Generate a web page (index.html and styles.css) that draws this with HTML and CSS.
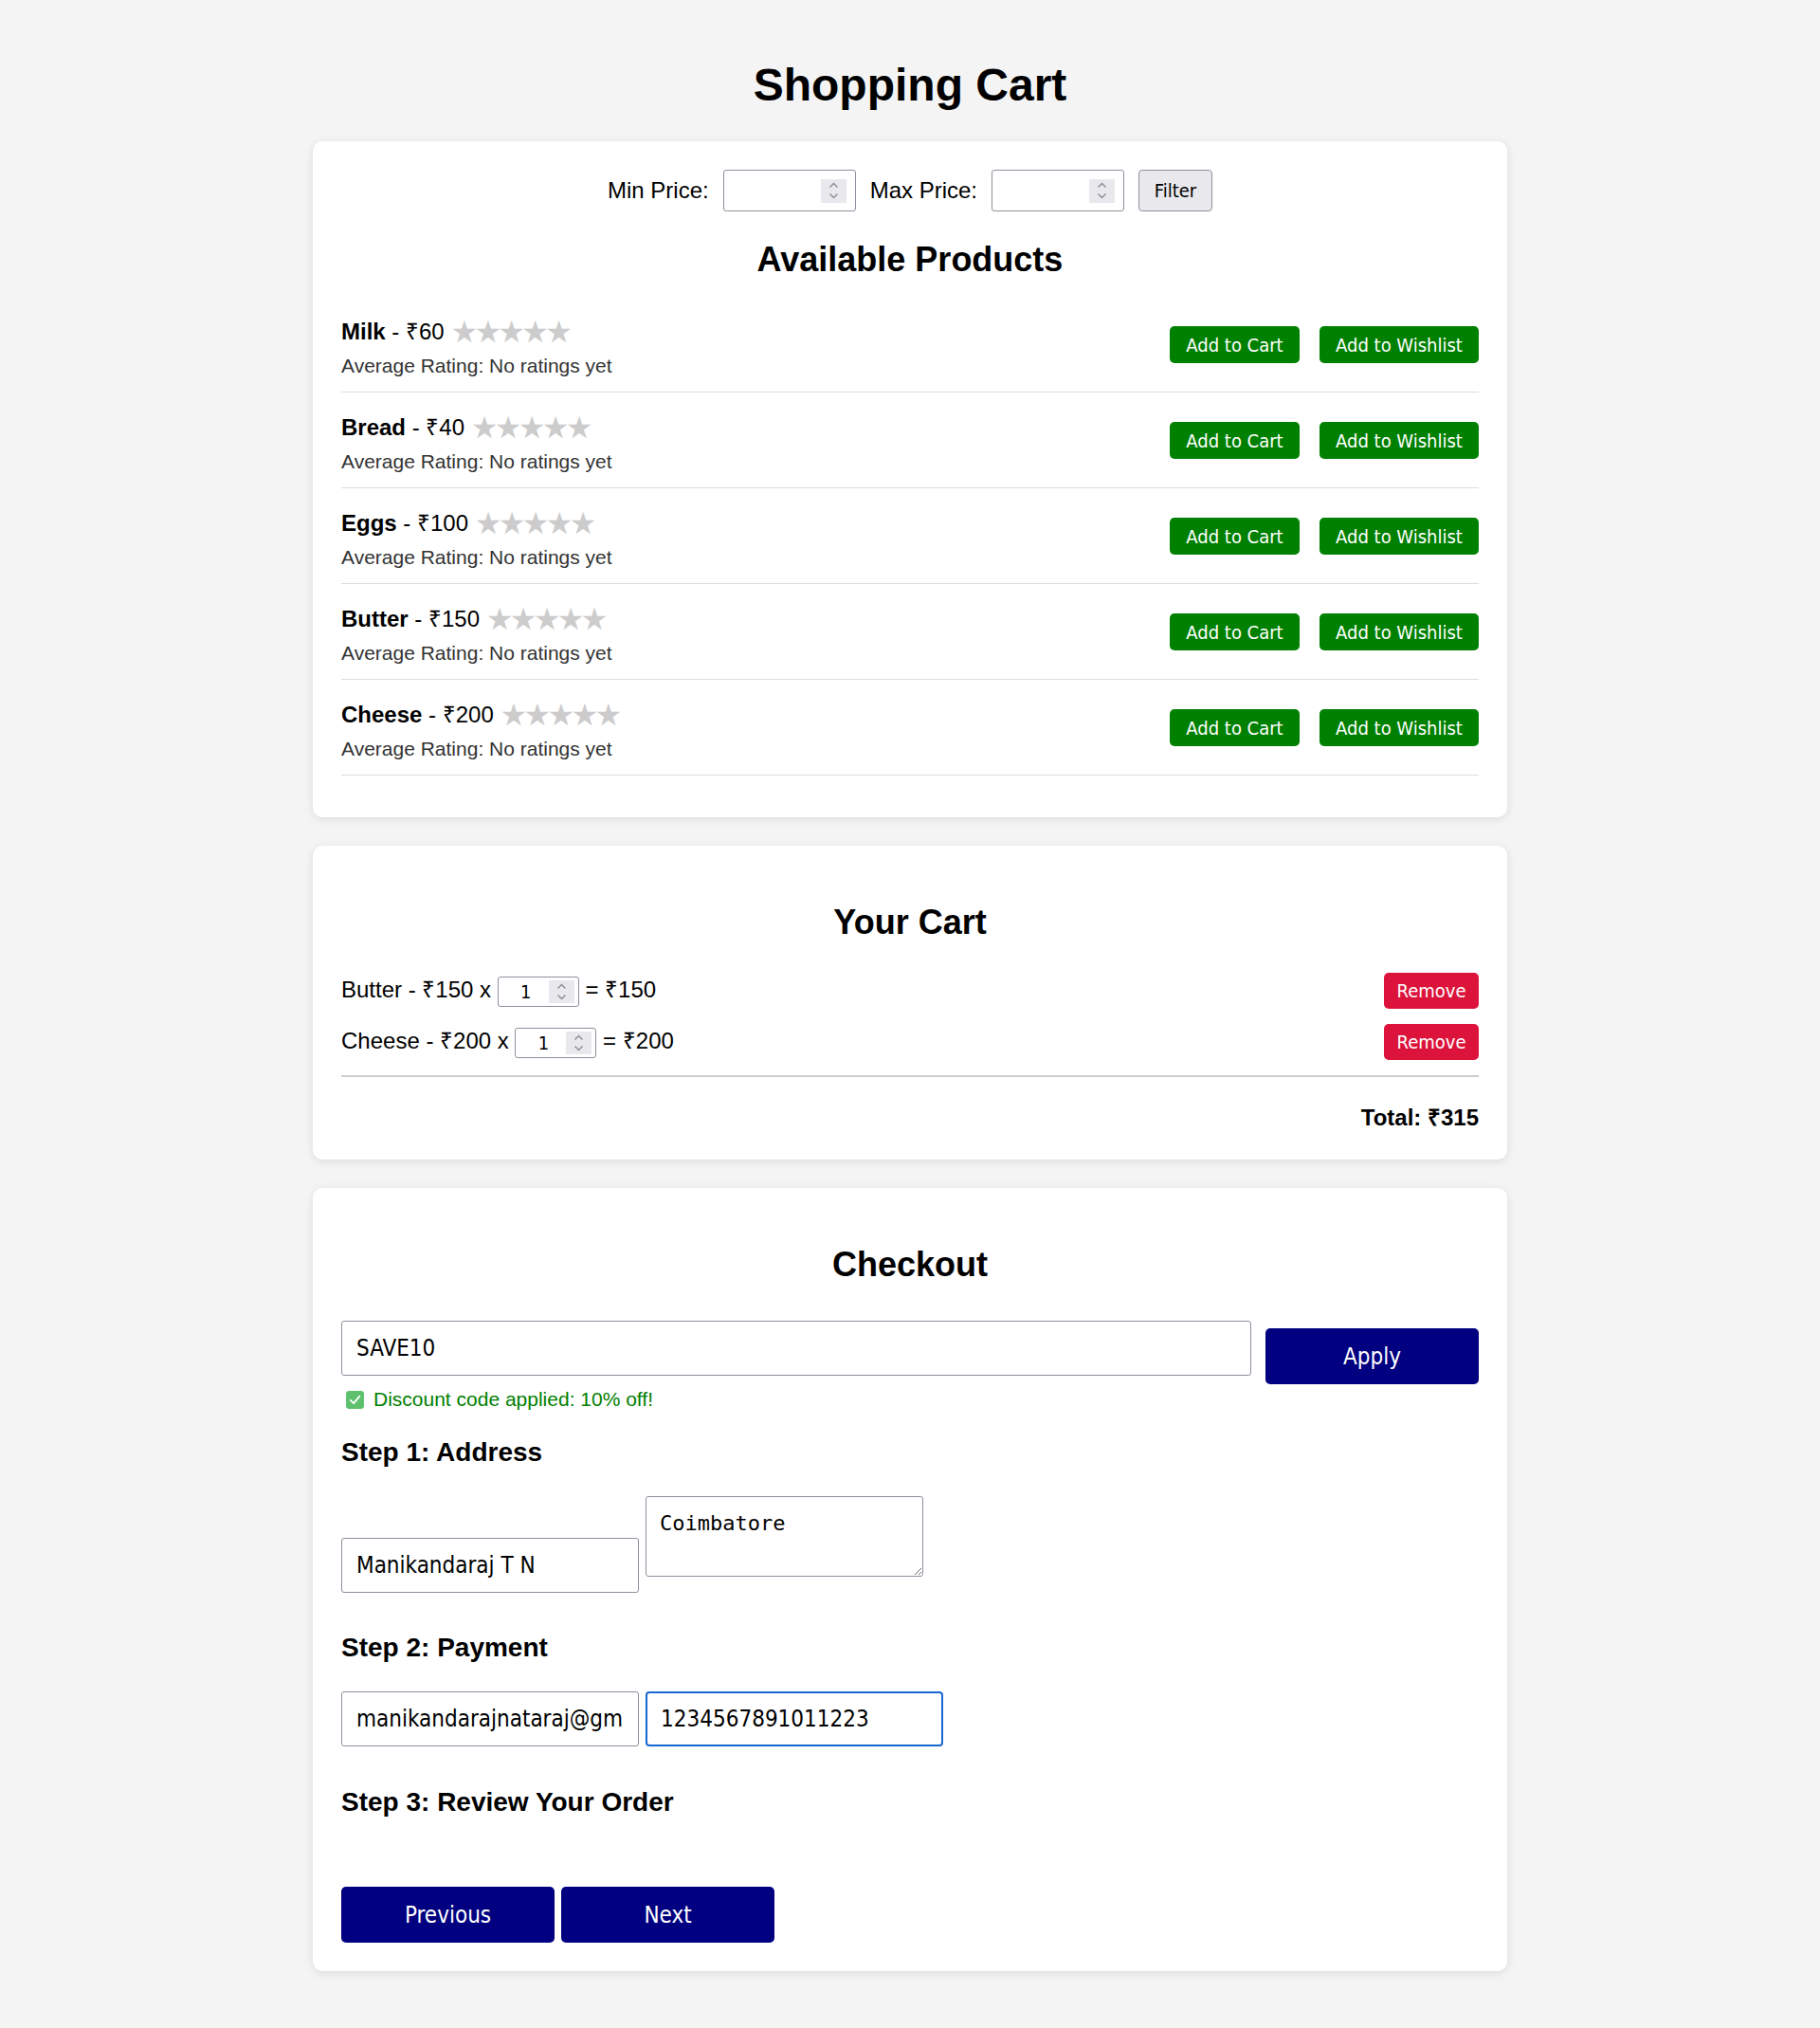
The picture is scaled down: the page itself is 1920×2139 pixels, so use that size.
FILE: index.html
```html
<!DOCTYPE html>
<html lang="en">
<head>
<meta charset="utf-8">
<title>Shopping Cart</title>
<link rel="stylesheet" href="styles.css">
</head>
<body>
<div class="page">
  <h1 class="title">Shopping Cart</h1>

  <section class="card">
    <div class="filter">
      <label class="filter-label">Min Price:</label>
      <input class="num-input" type="number">
      <label class="filter-label">Max Price:</label>
      <input class="num-input" type="number">
      <button class="btn-filter">Filter</button>
    </div>
    <h2 class="section-title">Available Products</h2>

    <div class="product">
      <div class="info">
        <div class="name"><strong>Milk</strong> - ₹60 <span class="stars">★★★★★</span></div>
        <div class="rating">Average Rating: No ratings yet</div>
      </div>
      <div class="actions"><button class="btn btn-green btn-add">Add to Cart</button><button class="btn btn-green btn-wish">Add to Wishlist</button></div>
    </div>
    <div class="product">
      <div class="info">
        <div class="name"><strong>Bread</strong> - ₹40 <span class="stars">★★★★★</span></div>
        <div class="rating">Average Rating: No ratings yet</div>
      </div>
      <div class="actions"><button class="btn btn-green btn-add">Add to Cart</button><button class="btn btn-green btn-wish">Add to Wishlist</button></div>
    </div>
    <div class="product">
      <div class="info">
        <div class="name"><strong>Eggs</strong> - ₹100 <span class="stars">★★★★★</span></div>
        <div class="rating">Average Rating: No ratings yet</div>
      </div>
      <div class="actions"><button class="btn btn-green btn-add">Add to Cart</button><button class="btn btn-green btn-wish">Add to Wishlist</button></div>
    </div>
    <div class="product">
      <div class="info">
        <div class="name"><strong>Butter</strong> - ₹150 <span class="stars">★★★★★</span></div>
        <div class="rating">Average Rating: No ratings yet</div>
      </div>
      <div class="actions"><button class="btn btn-green btn-add">Add to Cart</button><button class="btn btn-green btn-wish">Add to Wishlist</button></div>
    </div>
    <div class="product">
      <div class="info">
        <div class="name"><strong>Cheese</strong> - ₹200 <span class="stars">★★★★★</span></div>
        <div class="rating">Average Rating: No ratings yet</div>
      </div>
      <div class="actions"><button class="btn btn-green btn-add">Add to Cart</button><button class="btn btn-green btn-wish">Add to Wishlist</button></div>
    </div>
  </section>

  <section class="card">
    <h2 class="section-title">Your Cart</h2>
    <div class="cart-item">
      <span class="cart-text">Butter - ₹150 x <input class="qty" type="number" value="1"> = ₹150</span>
      <button class="btn btn-red">Remove</button>
    </div>
    <div class="cart-item">
      <span class="cart-text">Cheese - ₹200 x <input class="qty" type="number" value="1"> = ₹200</span>
      <button class="btn btn-red">Remove</button>
    </div>
    <div class="total">Total: ₹315</div>
  </section>

  <section class="card">
    <h2 class="section-title">Checkout</h2>
    <div class="coupon">
      <input class="text-input coupon-input" type="text" value="SAVE10">
      <button class="btn-navy btn-apply">Apply</button>
    </div>
    <p class="msg"><svg class="check" viewBox="0 0 20 20" width="21" height="21"><rect x="1" y="1" width="18" height="18" rx="3" fill="#5dc06c"/><path d="M5.5 10.3 L8.7 13.4 L14.6 6.4" fill="none" stroke="#ffffff" stroke-width="1.8" stroke-linecap="round" stroke-linejoin="round"/></svg>Discount code applied: 10% off!</p>

    <h3 class="step">Step 1: Address</h3>
    <div class="field-row address-row">
      <input class="text-input field" type="text" value="Manikandaraj T N">
      <textarea class="area">Coimbatore</textarea>
    </div>

    <h3 class="step">Step 2: Payment</h3>
    <div class="field-row">
      <input class="text-input field" type="text" value="manikandarajnataraj@gmail.com">
      <input class="text-input field focused" type="text" value="1234567891011223">
    </div>

    <h3 class="step">Step 3: Review Your Order</h3>
    <div class="nav">
      <button class="btn-navy btn-step">Previous</button>
      <button class="btn-navy btn-step">Next</button>
    </div>
  </section>
</div>
</body>
</html>
```

FILE: styles.css
```css
* {
  box-sizing: border-box;
}

body {
  margin: 0;
  background: #f4f4f4;
  font-family: "Liberation Sans", Arial, sans-serif;
  font-size: 24px;
  color: #000;
}

.page {
  width: 1260px;
  margin: 0 auto;
  padding: 30px 0 40px;
}

.title {
  font-size: 48px;
  font-weight: bold;
  text-align: center;
  margin: 32px 0 32px;
  line-height: 55px;
}

.card {
  background: #fff;
  border-radius: 10px;
  box-shadow: 0 2px 10px rgba(0, 0, 0, 0.1);
  padding: 30px;
  margin-bottom: 30px;
}

.section-title {
  font-size: 36px;
  font-weight: bold;
  text-align: center;
  margin: 30px 0;
  line-height: 42px;
}

.filter {
  display: flex;
  justify-content: center;
  align-items: center;
  gap: 15px;
  height: 44px;
}

.filter-label {
  line-height: 28px;
}

button,
input,
textarea {
  font-family: "DejaVu Sans Condensed", "DejaVu Sans", sans-serif;
  font-stretch: condensed;
}

input[type="number"]::-webkit-inner-spin-button {
  -webkit-appearance: none;
  appearance: none;
  display: block;
  opacity: 1;
  width: 27px;
  margin: 0;
  background: #e9e9ed url("data:image/svg+xml,%3Csvg xmlns='http://www.w3.org/2000/svg' width='27' height='24' viewBox='0 0 27 24'%3E%3Cpath d='M9.5 8.5 L13.5 4.5 L17.5 8.5 M9.5 15.5 L13.5 19.5 L17.5 15.5' fill='none' stroke='%238b8b96' stroke-width='1.4'/%3E%3C/svg%3E") no-repeat center;
}

.num-input {
  width: 140px;
  height: 44px;
  padding: 8px 9px 8px 10px;
  font-size: 22px;
  border: 1px solid #8f8f9d;
  border-radius: 3px;
  background: #fff;
}

.btn-filter {
  width: 78px;
  height: 44px;
  padding: 0;
  font-size: 20px;
  background: #e9e9ed;
  border: 1px solid #8f8f9d;
  border-radius: 4px;
  color: #000;
}

.product {
  display: flex;
  justify-content: space-between;
  align-items: flex-start;
  padding: 11px 0 15px;
  border-bottom: 1px solid #ddd;
  margin: 12px 0;
}

.product:last-child {
  margin-bottom: 14px;
}

.name {
  font-size: 24px;
  line-height: 28px;
}

.stars {
  font-family: "DejaVu Sans", sans-serif;
  font-size: 32px;
  color: #cccccc;
  letter-spacing: -3.7px;
  line-height: 0;
  vertical-align: -3px;
}

.rating {
  margin-top: 10px;
  font-size: 21px;
  line-height: 24px;
  color: #333;
}

.actions {
  display: flex;
  gap: 21px;
  margin-top: 8px;
}

.btn {
  border: none;
  border-radius: 5px;
  color: #fff;
  font-size: 20px;
  padding: 0;
  text-align: center;
}

.btn-green {
  background: #008000;
  height: 39px;
}

.btn-add {
  width: 137px;
}

.btn-wish {
  width: 168px;
}

.btn-red {
  background: #dc143c;
  width: 100px;
  height: 38px;
  margin-top: 2px;
}

.cart-item {
  display: flex;
  justify-content: space-between;
  align-items: flex-start;
  height: 40px;
}

.cart-item + .cart-item {
  margin-top: 14px;
}

.cart-text {
  line-height: 28px;
  margin-top: 6px;
}

.qty {
  width: 86px;
  height: 32px;
  padding: 3px 4px 3px 5px;
  font-size: 20px;
  text-align: center;
  border: 1px solid #8f8f9d;
  border-radius: 3px;
  vertical-align: middle;
}

.total {
  margin-top: 16px;
  border-top: 2px solid #ccc;
  padding-top: 29px;
  text-align: right;
  font-weight: bold;
  line-height: 28px;
}

.coupon {
  display: flex;
  align-items: flex-start;
  gap: 15px;
  margin-top: 38px;
}

.text-input {
  height: 58px;
  padding: 0 15px;
  font-size: 24px;
  border: 1px solid #8f8f9d;
  border-radius: 3px;
  background: #fff;
  color: #000;
}

.coupon-input {
  flex: 1;
}

.btn-navy {
  background: #000080;
  color: #fff;
  border: none;
  border-radius: 5px;
  font-size: 24px;
  width: 225px;
  height: 59px;
  padding: 0;
}

.btn-apply {
  margin-top: 8px;
}

.msg {
  margin: 4px 0 -2px;
  font-size: 21px;
  line-height: 24px;
  color: #008000;
  display: flex;
  align-items: center;
}

.check {
  margin: 0 9px 0 4px;
  flex: none;
}

.step {
  font-size: 28px;
  font-weight: bold;
  margin: 30px 0;
  line-height: 32px;
}

.field-row {
  display: flex;
  align-items: flex-end;
  gap: 7px;
  padding-bottom: 13px;
}

.address-row {
  padding-bottom: 12px;
}

.field {
  width: 314px;
}

.area {
  width: 293px;
  height: 85px;
  margin-bottom: 17px;
  padding: 15px 14px;
  font-family: "DejaVu Sans Mono", monospace;
  font-size: 22px;
  border: 1px solid #8f8f9d;
  border-radius: 3px;
  color: #000;
}

.focused {
  border: 2px solid #1967d2;
  border-radius: 4px;
  padding: 0 14px;
  outline: none;
}

.nav {
  display: flex;
  gap: 7px;
  margin-top: 73px;
}
```
